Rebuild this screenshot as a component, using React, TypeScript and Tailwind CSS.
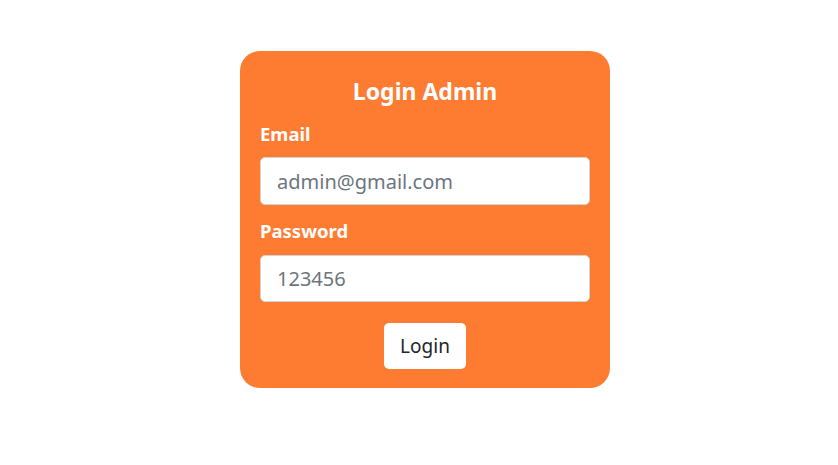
export default function App() {
  return (
    <div className="min-h-screen w-full bg-white flex justify-center pt-[51px] pl-[12px] font-['Noto_Sans',sans-serif]">
      <div className="w-[370px] h-[337px] bg-[#fe7c32] rounded-[20px] px-5 pt-[20px] flex flex-col">
        <h1 className="text-white font-bold text-[23px] leading-[40px] text-center">Login Admin</h1>
        <label className="text-white font-bold text-[18.5px] leading-[26px] mt-[10px]">Email</label>
        <input
          type="email"
          placeholder="admin@gmail.com"
          className="mt-[10px] h-[48px] w-full bg-white rounded-[5px] border border-[#ced4da] px-4 text-[20px] text-[#212529] placeholder:text-[#6c757d] outline-none"
        />
        <label className="text-white font-bold text-[18.5px] leading-[26px] mt-[13px]">Password</label>
        <input
          type="password"
          placeholder="123456"
          className="mt-[11px] h-[47px] w-full bg-white rounded-[5px] border border-[#ced4da] px-4 text-[20px] text-[#212529] placeholder:text-[#6c757d] outline-none"
        />
        <div className="flex justify-center mt-[21px]">
          <button className="w-[82px] h-[46px] bg-white rounded-[5px] text-[19px] text-[#212529]">Login</button>
        </div>
      </div>
    </div>
  );
}
